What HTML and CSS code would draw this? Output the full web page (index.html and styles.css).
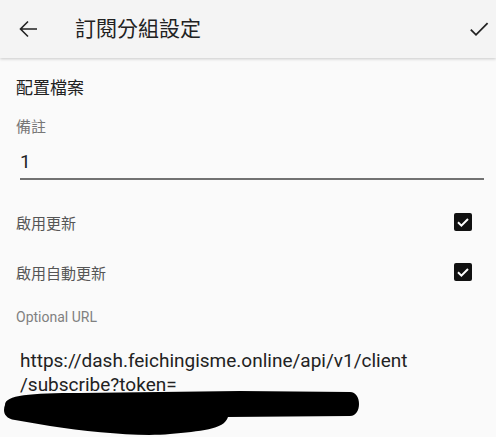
FILE: index.html
```html
<!DOCTYPE html>
<html>
	<head>
		<meta charset="utf-8" />
		<title>訂閱分組設定</title>
		<link rel="stylesheet" href="styles.css">
	</head>
	<body>
		<div class="toolbar">
			<svg class="toolbar-back" width="24" height="24" viewBox="0 0 24 24">
				<path d="M21 12H5M12 4.5L4.5 12L12 19.5" fill="none" stroke="#222" stroke-width="1.6"/>
			</svg>
			<div class="toolbar-title">訂閱分組設定</div>
			<svg class="toolbar-ok" width="24" height="24" viewBox="0 0 24 24">
				<path d="M3.8 12.6L9 17.8L20.6 6.2" fill="none" stroke="#222" stroke-width="1.8"/>
			</svg>
		</div>

		<div class="content">
			<div class="section-title">配置檔案</div>

			<div class="field-label">備註</div>
			<div class="field-input">1</div>

			<div class="check-list">
				<div class="check-row">
					<span>啟用更新</span>
					<span class="check-box">
						<svg width="18" height="18" viewBox="0 0 18 18"><path d="M4 9.3L7.4 12.6L14 6" fill="none" stroke="#fff" stroke-width="2"/></svg>
					</span>
				</div>
				<div class="check-row">
					<span>啟用自動更新</span>
					<span class="check-box">
						<svg width="18" height="18" viewBox="0 0 18 18"><path d="M4 9.3L7.4 12.6L14 6" fill="none" stroke="#fff" stroke-width="2"/></svg>
					</span>
				</div>
			</div>

			<div class="field-label field-label-url">Optional URL</div>
			<div class="url-text">https://dash.feichingisme.online/api/v1/client<br>/subscribe?token=</div>
		</div>

		<!-- 打碼 -->
		<svg class="redact" width="370" height="57" viewBox="0 0 370 57">
			<path d="M5 25C5 15 30 13 80 13L240 11L350 12C362 12 362 36 350 36L228 37C224 50 200 51 170 54C140 57 90 52 50 46L15 40C3 38 3 30 5 25Z" fill="#000"/>
		</svg>
	</body>
</html>
```

FILE: styles.css
```css
body{margin: 0px;padding: 0px;background: #fafafa;font-family: Roboto, "Noto Sans CJK TC", sans-serif;color: #222;height: 437px;overflow: hidden;position: relative;}
.toolbar{
	height: 58px;display: flex;align-items: center;
	padding: 0px 5px 0px 16px;
	background: #f4f4f4;box-shadow: 0px 1px 3px rgba(0,0,0,0.2);
	position: relative;z-index: 2;
}
.toolbar-back{display: block;}
.toolbar-title{flex: 1;margin-left: 35px;font-size: 21px;line-height: 28px;color: #222;}
.toolbar-ok{display: block;}

.content{padding: 18px 12px 0px 16px;}
.section-title{font-size: 17px;line-height: 24px;color: #222;}
.field-label{margin-top: 16px;font-size: 15px;line-height: 22px;color: #777;}
.field-input{
	margin: 10px 0px 0px 4px;
	font-size: 19px;line-height: 28px;color: #222;
	padding-bottom: 2px;border-bottom: 2px solid #727272;
}
.check-list{margin-top: 17px;}
.check-row{
	height: 50px;display: flex;align-items: center;justify-content: space-between;
	font-size: 15px;color: #555;
}
.check-box{
	width: 18px;height: 18px;margin-right: 12px;
	background: #111;border-radius: 2px;display: block;
}
.check-box svg{display: block;}
.field-label-url{margin-top: 9px;font-size: 14px;color: #808080;}
.url-text{margin: 21px 0px 0px 4px;font-size: 19px;line-height: 24px;color: #222;}
.redact{position: absolute;left: 0px;top: 380px;}
```
